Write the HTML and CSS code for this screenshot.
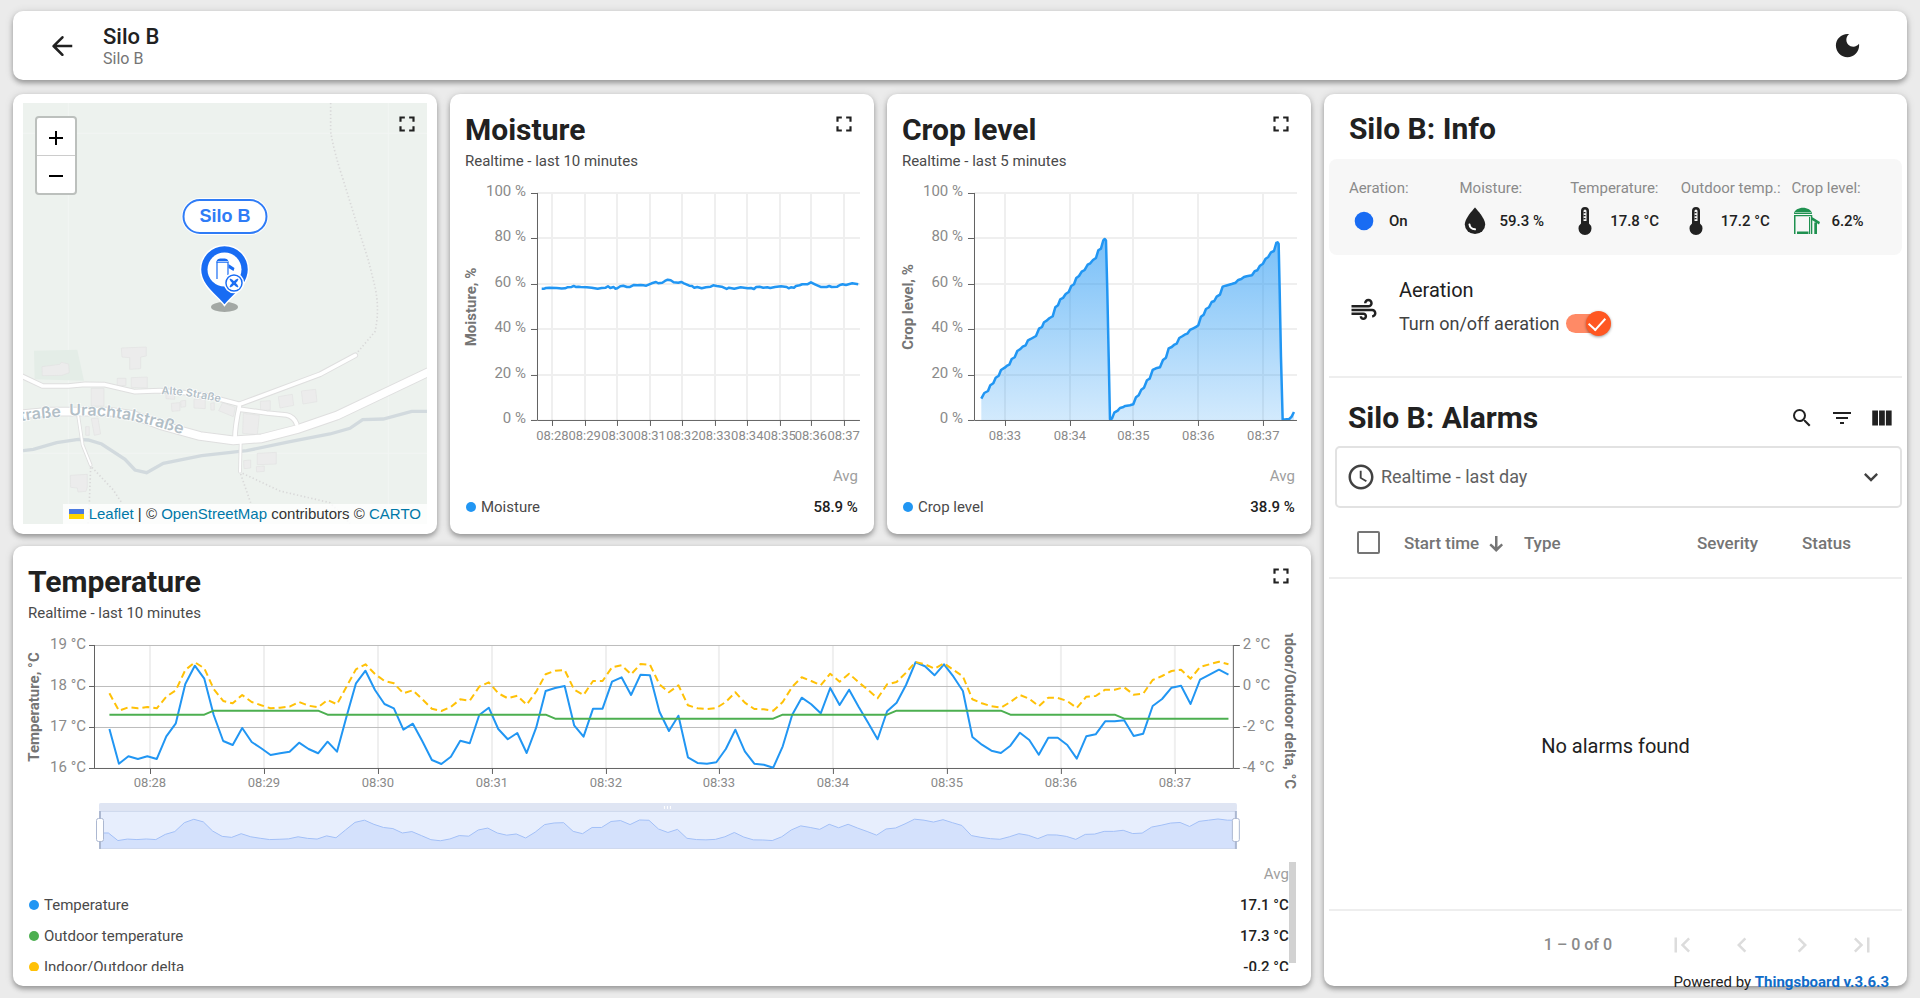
FILE: index.html
```html
<!DOCTYPE html>
<html lang="en">
<head>
<meta charset="utf-8">
<title>Silo B</title>
<link rel="stylesheet" href="styles.css">
</head>
<body>
<svg class="defs" aria-hidden="true">
  <symbol id="i-full" viewBox="0 0 24 24"><path d="M7 14H5v5h5v-2H7v-3zm-2-4h2V7h3V5H5v5zm12 7h-3v2h5v-5h-2v3zM14 5v2h3v3h2V5h-5z"/></symbol>
  <symbol id="i-thermo" viewBox="0 0 30 30"><path d="M15 1a4 4 0 0 0-4 4v12.400a6.500 6.500 0 1 0 8 0V5a4 4 0 0 0-4-4z"/><path d="M13.500 5a1.500 1.500 0 0 1 3 0v10h-3z" fill="#f7f7f7"/><path d="M15.500 6h-2v1.200h2zm0 3h-2v1.200h2zm0 3h-2v1.200h2z"/></symbol>
  <symbol id="i-chev" viewBox="0 0 24 24"><path d="M10 6 8.590 7.410 13.170 12l-4.580 4.590L10 18l6-6z"/></symbol>
  <symbol id="i-end" viewBox="0 0 24 24"><path d="M5.590 7.410 10.180 12l-4.590 4.590L7 18l6-6-6-6zM16 6h2v12h-2z"/></symbol>
</svg>

<header class="card topbar">
  <button class="icon-btn" aria-label="Back"><svg class="i-back" viewBox="0 0 24 24"><path d="M20.200 11H7.800l5.300-5.300a1 1 0 0 0-1.500-1.400L4.500 11.300a1 1 0 0 0 0 1.400l7.100 7a1 1 0 0 0 1.500-1.400L7.800 13h12.400z"/></svg></button>
  <div class="heading">
    <h1>Silo B</h1>
    <p>Silo B</p>
  </div>
  <button class="icon-btn" aria-label="Dark mode"><svg class="i-moon" viewBox="0 0 24 24"><path d="M12 3c-4.970 0-9 4.030-9 9s4.030 9 9 9 9-4.030 9-9c0-.46-.04-.92-.1-1.360-.98 1.370-2.580 2.260-4.400 2.260-2.980 0-5.400-2.420-5.400-5.400 0-1.810.89-3.420 2.260-4.400C12.920 3.040 12.460 3 12 3z"/></svg></button>
</header>

<main class="board">
  <div class="left">
    <div class="trio">
      <section class="card map-card">
        <div class="map">
          <svg class="tiles" viewBox="69 309 1212 1263" preserveAspectRatio="xMidYMid slice">
            <defs>
              <path id="p-alte" d="M484 1183Q570 1183 720 1222"/>
              <path id="p-str" d="M62 1264Q120 1254 220 1248"/>
              <path id="p-ura" d="M208 1247Q310 1244 400 1263T680 1346"/>
            </defs>
            <rect x="69" y="309" width="1212" height="1263" fill="#edf2ee"/>
            <path d="M205 309V1572M1165 309V1572M69 400H1281M69 1360H1281" stroke="#f2f5f3" stroke-width="3"/>
            <g transform="translate(0 780)">
              <path d="M102 272 232 269 252 362 104 358z" fill="#e4ede7"/>
              <g fill="#ececec" stroke="#e2e2e2" stroke-width="2">
                <path d="M126 320 180 313 184 307 206 312 208 338 186 346 127 347zM364 264 439 261V288L422 291V326L389 328V293L366 291zM352 355H378V376L352 378zM394 353 442 351V384L394 382zM274 385H312V438H274zM274 476 294 474 302 522 283 526zM257 500H268V526H257zM514 430 540 428V452L516 454zM542 423 557 421V440L543 442zM582 418 616 416V446L582 444zM632 430 643 428V450H633zM656 452 668 428 706 442 700 470zM781 424 811 422V450L782 452zM835 410 877 403 881 436 840 444zM904 393 947 388 951 425 909 432zM730 460 778 466 772 524 728 520zM772 580 829 577V612L772 614zM731 602 752 600V624L732 626zM769 620 793 618V634L770 636zM211 646 262 643V682L258 694 234 696 232 684 212 682zM498 402 524 404V418L498 416z"/>
              </g>
              <path class="trail" d="M992-471V-385Q1003-320 1030-240L1070-110 1105 0 1125 80Q1140 150 1125 215L1070 280M272 622 268 730 264 790M276 622 340 690 366 730M722 642 752 728M728 640 840 693 990 728 1050 790"/>
              <path d="M69 572 100 568 170 548 235 538 265 540 305 552 375 598 405 630 440 638 490 610 605 587 740 572 870 545 990 522 1050 505 1088 479 1150 477 1235 454 1281 454" fill="none" stroke="#d2dade" stroke-width="10"/>
              <g class="casing">
                <path d="M235 470 248 555 272 615M722 550 720 635" stroke-width="11"/>
                <path d="M60 346 128 378 205 378 255 373 315 374 405 395 480 392 600 402 718 433 960 343 1066 286M718 440Q705 500 705 535M722 448 800 459 860 465Q882 470 890 492" stroke-width="17"/>
                <path d="M60 463 150 455 330 455 400 465 480 495 600 528 700 541 785 535 890 508 1010 467 1290 334" stroke-width="29"/>
              </g>
              <g class="road">
                <path d="M235 470 248 555 272 615M722 550 720 635" stroke-width="6"/>
                <path d="M60 346 128 378 205 378 255 373 315 374 405 395 480 392 600 402 718 433 960 343 1066 286M718 440Q705 500 705 535M722 448 800 459 860 465Q882 470 890 492" stroke-width="11"/>
                <path d="M60 463 150 455 330 455 400 465 480 495 600 528 700 541 785 535 890 508 1010 467 1290 334" stroke-width="23"/>
              </g>
            </g>
            <text class="street small"><textPath href="#p-alte">Alte Straße</textPath></text>
            <text class="street"><textPath href="#p-str">traße</textPath></text>
            <text class="street"><textPath href="#p-ura">Urachtalstraße</textPath></text>
          </svg>
          <div class="zoom-ctl">
            <button aria-label="Zoom in"><svg viewBox="-1 -1 16 16"><path d="M0 7h14v2H0zM6 1h2v14H6z"/></svg></button>
            <button aria-label="Zoom out"><svg viewBox="-1 -1 16 16"><path d="M0 7h14v2H0z"/></svg></button>
          </div>
          <div class="pin">
            <span class="pin-label">Silo B</span>
            <svg class="pin-icon" viewBox="0 0 52 74">
              <ellipse cx="26" cy="64" rx="13.500" ry="5" fill="#a3a8a4"/>
              <path d="M26 62.500C19 53 2 43 2 26.500a24 24 0 0 1 48 0C50 43 33 53 26 62.500z" fill="#196cf3" stroke="#fff" stroke-width="1.500"/>
              <circle cx="26" cy="26.500" r="17" fill="#fff"/>
              <path d="M18.500 36V19h11v13" fill="none" stroke="#196cf3" stroke-width="1.200"/>
              <path d="M18 19.500c0-4 3-4 6-4s6 0 6 4zM30 21l6 4-1 3-5-3z" fill="#196cf3"/>
              <path d="M19 18.500h11" stroke="#a9c8fb"/>
              <circle cx="35.500" cy="40" r="9.500" fill="#196cf3" stroke="#fff" stroke-width="1.500"/>
              <circle cx="35.500" cy="40" r="7.300" fill="#fff"/>
              <path d="M31.500 36l3 1.500 1 2 1-2 3-1.500-1.500 3-2 1 2 1 1.500 3-3-1.500-1-2-1 2-3 1.500 1.500-3 2-1-2-1z" fill="#196cf3" stroke="#196cf3"/>
            </svg>
          </div>
          <p class="attribution"><svg viewBox="0 0 15 10"><path d="M0 0h15v5H0z" fill="#4c7be1"/><path d="M0 5h15v5H0z" fill="#ffd500"/></svg> <a href="#">Leaflet</a> | © <a href="#">OpenStreetMap</a> contributors © <a href="#">CARTO</a></p>
        </div>
        <button class="full" aria-label="Fullscreen"><svg><use href="#i-full"/></svg></button>
      </section>

      <section class="card chart-card">
        <div class="chart-head"><h2>Moisture</h2><p>Realtime - last 10 minutes</p></div>
        <button class="full" aria-label="Fullscreen"><svg><use href="#i-full"/></svg></button>
        <svg class="plot" id="moisture" viewBox="450 178 424 283"></svg>
        <table class="legend">
          <tr><th></th><th>Avg</th></tr>
          <tr><td><i class="dot blue"></i>Moisture</td><td>58.9 %</td></tr>
        </table>
      </section>

      <section class="card chart-card">
        <div class="chart-head"><h2>Crop level</h2><p>Realtime - last 5 minutes</p></div>
        <button class="full" aria-label="Fullscreen"><svg><use href="#i-full"/></svg></button>
        <svg class="plot" id="crop" viewBox="887 178 424 283"></svg>
        <table class="legend">
          <tr><th></th><th>Avg</th></tr>
          <tr><td><i class="dot blue"></i>Crop level</td><td>38.9 %</td></tr>
        </table>
      </section>
    </div>

    <section class="card chart-card temp-card">
      <div class="chart-head"><h2>Temperature</h2><p>Realtime - last 10 minutes</p></div>
      <button class="full" aria-label="Fullscreen"><svg><use href="#i-full"/></svg></button>
      <svg class="plot" id="temperature" viewBox="13 630 1298 229"></svg>
      <div class="legend-scroll">
        <table class="legend">
          <tr><th></th><th>Avg</th></tr>
          <tr><td><i class="dot blue"></i>Temperature</td><td>17.1 °C</td></tr>
          <tr><td><i class="dot green"></i>Outdoor temperature</td><td>17.3 °C</td></tr>
          <tr><td><i class="dot amber"></i>Indoor/Outdoor delta</td><td>-0.2 °C</td></tr>
        </table>
        <span class="scrollbar"></span>
      </div>
    </section>
  </div>

  <section class="card side">
    <h2 class="side-title">Silo B: Info</h2>
    <dl class="stats">
      <div><dt>Aeration:</dt><dd><svg viewBox="0 0 30 30"><circle cx="15" cy="15" r="9.300" fill="#196cf3"/></svg>On</dd></div>
      <div><dt>Moisture:</dt><dd><svg viewBox="0 0 30 30"><path d="M15 1.500S4.800 12 4.800 18.400a10.200 9.600 0 0 0 20.400 0C25.200 12 15 1.500 15 1.500z"/><path d="M9.500 18.500c.3 3 2.300 4.500 5.500 4.800" fill="none" stroke="#fff" stroke-width="2" stroke-linecap="round"/></svg>59.3 %</dd></div>
      <div><dt>Temperature:</dt><dd><svg><use href="#i-thermo"/></svg>17.8 °C</dd></div>
      <div><dt>Outdoor temp.:</dt><dd><svg><use href="#i-thermo"/></svg>17.2 °C</dd></div>
      <div><dt>Crop level:</dt><dd><svg viewBox="0 0 30 30"><g fill="#1f9150"><path d="M3 8c0-4 5-6.200 9-6.200S21 4 21 8zM3 9h18v1.300H3zM3 9h1.500v19H3zM18 11h1.200v17H18zM20 9h1.300v19H20zM6 25.500h11.500V28H6zM21 11l8 5-1 2.500-7-4.500zM23.300 16.500H26V28h-2.700z"/><path d="M4 6.500h16" stroke="#8fcbaa"/></g></svg>6.2%</dd></div>
    </dl>
    <div class="aeration">
      <svg viewBox="0 0 24 24"><path d="M14.500 17c0 1.650-1.350 3-3 3s-3-1.350-3-3h2c0 .55.45 1 1 1s1-.45 1-1-.45-1-1-1H2v-2h9.500c1.650 0 3 1.350 3 3zM19 6.500C19 4.570 17.430 3 15.500 3S12 4.570 12 6.500h2c0-.83.67-1.500 1.500-1.500s1.500.67 1.500 1.500S16.330 8 15.500 8H2v2h13.500c1.930 0 3.500-1.570 3.500-3.500zM18.500 11H2v2h16.500c.83 0 1.500.67 1.500 1.500s-.67 1.500-1.500 1.500v2c1.930 0 3.500-1.570 3.500-3.500S20.430 11 18.500 11z"/></svg>
      <div>
        <h3>Aeration</h3>
        <label>Turn on/off aeration <input type="checkbox" role="switch" class="toggle" checked></label>
      </div>
    </div>

    <div class="alarms-head">
      <h2>Silo B: Alarms</h2>
      <button class="tool" aria-label="Search"><svg viewBox="0 0 24 24"><path d="M15.500 14h-.79l-.28-.27A6.470 6.470 0 0 0 16 9.500 6.500 6.500 0 1 0 9.500 16c1.610 0 3.090-.59 4.230-1.570l.27.28v.79l5 4.990L20.490 19l-4.990-5zm-6 0C7.010 14 5 11.990 5 9.500S7.010 5 9.500 5 14 7.010 14 9.500 11.990 14 9.500 14z"/></svg></button>
      <button class="tool" aria-label="Filter"><svg viewBox="0 0 24 24"><path d="M10 18h4v-2h-4v2zM3 6v2h18V6H3zm3 7h12v-2H6v2z"/></svg></button>
      <button class="tool" aria-label="Columns"><svg viewBox="0 0 24 24"><path d="M3 5h5.300v14H3zM9.300 5h5.300v14H9.300zM15.600 5h5.300v14h-5.300z"/></svg></button>
    </div>
    <button class="period">
      <svg viewBox="0 0 24 24"><path d="M11.990 2C6.470 2 2 6.480 2 12s4.470 10 9.990 10C17.520 22 22 17.520 22 12S17.520 2 11.990 2zM12 20c-4.420 0-8-3.580-8-8s3.580-8 8-8 8 3.580 8 8-3.580 8-8 8zM12.500 7H11v6l4.900 3 .8-1.200-4.200-2.500z"/></svg>
      <span>Realtime - last day</span>
      <svg class="down" viewBox="0 0 24 24"><path d="M7.410 8.590 12 13.170l4.590-4.580L18 10l-6 6-6-6z"/></svg>
    </button>
    <table class="alarms">
      <colgroup><col class="c-check"><col class="c-time"><col><col class="c-sev"><col class="c-status"></colgroup>
      <thead><tr>
        <th><input type="checkbox" class="check" aria-label="Select all"></th>
        <th>Start time <svg viewBox="0 0 14 16"><path d="M6 0h2.500v11l4-3.500L14 9.200 7.200 16 .4 9.200 2 7.500 6 11z"/></svg></th>
        <th>Type</th><th>Severity</th><th>Status</th>
      </tr></thead>
    </table>
    <p class="empty">No alarms found</p>
    <nav class="pager" aria-label="Pages">
      <span>1 – 0 of 0</span>
      <button disabled aria-label="First page"><svg class="flip"><use href="#i-end"/></svg></button>
      <button disabled aria-label="Previous page"><svg class="flip"><use href="#i-chev"/></svg></button>
      <button disabled aria-label="Next page"><svg><use href="#i-chev"/></svg></button>
      <button disabled aria-label="Last page"><svg><use href="#i-end"/></svg></button>
    </nav>
  </section>
</main>
<footer class="powered">Powered by <a href="#">Thingsboard v.3.6.3</a></footer>
<script src="charts.js"></script>
</body>
</html>
```

FILE: styles.css
```css
* { box-sizing: border-box; margin: 0; padding: 0; }
body {
  min-height: 100vh;
  padding: 11px 13px 12px;
  display: flex;
  flex-direction: column;
  gap: 14px;
  background: #ebebeb;
  color: #212121;
  font: 15px/20px Roboto, "Liberation Sans", sans-serif;
  position: relative;
}
button { background: none; border: 0; font: inherit; color: inherit; cursor: pointer; }
svg { fill: #212121; display: block; }
h1, h2, h3, th { font-weight: 500; }
.defs { position: absolute; width: 0; height: 0; }
.card {
  background: #fff;
  border-radius: 10px;
  box-shadow: 0 3px 5px rgba(0, 0, 0, .3), 0 1px 10px rgba(0, 0, 0, .12);
  position: relative;
}

.topbar { display: flex; align-items: center; min-height: 69px; padding: 0 44px 0 33px; }
.icon-btn { width: 32px; height: 32px; display: grid; place-items: center; }
.i-back { width: 30px; height: 30px; }
.i-moon { width: 31px; height: 31px; }
.heading { flex: 1; margin-left: 25px; padding-top: 2px; }
.heading h1 { font-size: 22px; line-height: 24px; }
.heading p { font-size: 16px; color: #757575; }

.board { flex: 1; display: grid; grid-template-columns: 69fr 31fr; gap: 13px; }
.left { display: grid; grid-template-rows: 1fr 1fr; gap: 12px; min-width: 0; }
.trio { display: grid; grid-template-columns: repeat(3, 1fr); gap: 13px; }
.full { position: absolute; top: 17px; right: 17px; width: 26px; height: 26px; }
.full svg { width: 26px; height: 26px; }

.map-card { padding: 9px 10px 10px; }
.map { position: relative; height: 100%; overflow: hidden; }
.tiles { width: 100%; height: 100%; position: absolute; }
.trail { fill: none; stroke: #d9d9d9; stroke-width: 5; stroke-dasharray: 4 7; }
.casing, .road { fill: none; stroke-linecap: round; stroke-linejoin: round; }
.casing { stroke: #dfdfdf; }
.road { stroke: #fff; }
.street { font: 600 48px Inter, sans-serif; fill: #b3bfc7; stroke: #fff; stroke-width: 4; paint-order: stroke; }
.street.small { font-size: 33px; }
.zoom-ctl {
  position: absolute; left: 12px; top: 13px; width: 42px;
  border: 2px solid #bcc0bd; border-radius: 4px; background: #fff;
}
.zoom-ctl button { width: 38px; height: 37px; display: grid; place-items: center; }
.zoom-ctl button + button { border-top: 1px solid #ccc; height: 38px; }
.zoom-ctl svg { width: 16px; height: 16px; fill: #000; }
.pin { position: absolute; left: 50%; top: 96px; transform: translateX(-50%); display: grid; justify-items: center; }
.pin-label {
  padding: 0 15px; line-height: 31px; border: 2px solid #2f7cf6; border-radius: 18px; background: #fff;
  box-shadow: 0 0 0 1px #fff; color: #2f7cf6; font-family: "Liberation Sans", sans-serif; font-weight: 700; font-size: 18px;
}
.pin-icon { width: 52px; height: 74px; margin-top: 9px; }
.attribution {
  position: absolute; right: 0; bottom: 0; padding: 0 6px; background: rgba(255, 255, 255, .8);
  font-family: "Liberation Sans", sans-serif; color: #333; line-height: 20px; white-space: nowrap;
}
.attribution svg { display: inline-block; width: 15px; height: 10px; }
.attribution a { color: #0078a8; text-decoration: none; }

.chart-card { display: flex; flex-direction: column; }
.chart-head { height: 84px; padding: 19px 15px 0; }
.chart-head h2, .side-title, .alarms-head h2 { font-size: 30px; line-height: 34px; font-weight: 700; }
.chart-head p { color: #4a4a4a; margin-top: 4px; }
.plot { width: 100%; }
.plot text { font-size: 15px; fill: #8a8a8a; text-anchor: end; }
.plot .time { font-size: 13px; text-anchor: middle; }
.plot .axis-name { font-weight: 700; fill: #757575; text-anchor: middle; }
.plot .grid { stroke: #efefef; stroke-width: 2; }
.plot .grid-strong { stroke: #bdbdbd; stroke-width: 1; }
.plot .axis { stroke: #616161; fill: none; }
.plot .line { fill: none; stroke: #2196f3; stroke-linejoin: round; }
.legend { width: calc(100% - 32px); margin: 0 16px; border-collapse: collapse; }
.legend tr { height: 31px; }
.legend td { color: #4a4a4a; }
.legend th { font-weight: 400; color: #9e9e9e; }
.legend th:last-child, .legend td:last-child { text-align: right; }
.legend td:last-child { color: #212121; font-weight: 500; }
.dot { display: inline-block; width: 10px; height: 10px; border-radius: 50%; margin-right: 5px; }
.blue { background: #2196f3; }
.green { background: #4caf50; }
.amber { background: #ffc107; }
.legend-scroll { height: 112px; overflow: hidden; position: relative; margin-right: 6px; }
.scrollbar { position: absolute; right: 9px; top: 3px; width: 7px; height: 101px; background: #d2d2d2; }

.side { display: flex; flex-direction: column; padding: 0 5px; }
.side-title { padding: 18px 20px 13px; }
.stats {
  display: grid; grid-template-columns: repeat(5, 1fr); height: 96px; padding: 19px 0 0 20px;
  background: #f7f7f7; border-radius: 8px;
}
.stats dt { color: #8a8a8a; white-space: nowrap; }
.stats dd { display: flex; align-items: center; gap: 10px; margin-top: 8px; font-weight: 500; white-space: nowrap; line-height: 30px; }
.stats svg { width: 30px; height: 30px; }
.aeration { display: flex; align-items: center; gap: 20px; height: 123px; padding: 0 20px 12px; border-bottom: 2px solid #eee; }
.aeration > svg { width: 30px; height: 30px; }
.aeration > div { padding-bottom: 6px; }
.aeration h3 { font-size: 20px; line-height: 28px; font-weight: 400; }
.aeration label { display: flex; align-items: center; gap: 7px; margin-top: 6px; font-size: 18px; line-height: 28px; color: #424242; }
.toggle { appearance: none; width: 43px; height: 19px; border-radius: 10px; background: #ff8a66; position: relative; }
.toggle::before {
  content: ""; position: absolute; right: -2px; top: -3px; width: 25px; height: 25px; border-radius: 50%;
  background: #ff5722; box-shadow: 0 1px 3px rgba(0, 0, 0, .4);
}
.toggle::after {
  content: ""; position: absolute; right: 4px; top: 3px; width: 14px; height: 8px;
  border: solid #fff; border-width: 0 0 2px 2px; transform: rotate(-48deg);
}
.alarms-head { display: flex; align-items: center; gap: 12px; height: 68px; padding: 11px 6px 0 19px; }
.alarms-head h2 { flex: 1; }
.tool { width: 28px; height: 28px; }
.tool svg { width: 24px; height: 24px; margin: auto; }
.tool:last-child svg { width: 26px; height: 26px; }
.period {
  display: flex; align-items: center; gap: 5px; height: 62px; margin-left: 6px; padding: 0 15px 0 9px;
  border: 2px solid #e2e2e2; border-radius: 5px; text-align: left; font-size: 18px; color: #616161;
}
.period span { flex: 1; }
.period svg { width: 30px; height: 30px; fill: #424242; }
.period .down { width: 28px; height: 28px; }
.alarms { width: 100%; border-collapse: collapse; table-layout: fixed; }
.alarms tr { height: 70px; border-bottom: 2px solid #eee; }
.alarms th { text-align: left; font-size: 17px; color: #757575; white-space: nowrap; }
.alarms th svg { display: inline-block; width: 14px; height: 16px; margin-left: 6px; fill: #757575; vertical-align: -3px; }
.c-check { width: 75px; }
.c-time { width: 120px; }
.c-sev { width: 105px; }
.c-status { width: 100px; }
.check { appearance: none; display: block; margin-left: 28px; width: 23px; height: 23px; border: 2px solid #757575; border-radius: 2px; }
.empty { flex: 1; display: grid; place-items: center; padding-top: 4px; font-size: 20px; }
.pager { display: flex; align-items: center; justify-content: flex-end; gap: 28px; height: 77px; padding: 0 24px 8px 0; border-top: 2px solid #eee; }
.pager span { color: #8a8a8a; font-size: 16px; font-weight: 500; margin-right: 26px; }
.pager button { width: 32px; height: 32px; }
.pager svg { width: 30px; height: 30px; margin: auto; fill: #dcdcdc; }
.flip { transform: scaleX(-1); }
.powered { position: absolute; right: 31px; bottom: 6px; line-height: 20px; }
.powered a { color: #106cc8; font-weight: 700; text-decoration: none; }
```

FILE: charts.js
```js
const NS = 'http://www.w3.org/2000/svg';

function add(parent, tag, attrs, text) {
  const el = document.createElementNS(NS, tag);
  for (const k in attrs) el.setAttribute(k, attrs[k]);
  if (text) el.textContent = text;
  parent.appendChild(el);
  return el;
}

function snap(v) { return Math.round(v) + 0.5; }

function toPath(points) {
  return 'M' + points.map(p => p[0].toFixed(1) + ' ' + p[1].toFixed(1)).join('L');
}

/* Percent charts: curve points are kept in thirds of a pixel. */
function percentChart(id, left, name, times, curve, filled) {
  const svg = document.getElementById(id);
  const top = 193, bottom = 420, axisX = left + 87, right = left + 410;
  times.forEach(([x]) => {
    add(svg, 'path', { class: 'grid', d: `M${Math.round(x)} ${top}V${bottom}` });
  });
  [100, 80, 60, 40, 20, 0].forEach((v, i) => {
    const y = snap(top + (bottom - top) * i / 5);
    if (v) add(svg, 'path', { class: 'grid', d: `M${axisX} ${y - 0.5}H${right}` });
    add(svg, 'path', { class: 'axis', d: `M${axisX - 6} ${y}H${axisX}` });
    add(svg, 'text', { x: left + 76, y: y + 3 }, v + ' %');
  });
  times.forEach(([x, label]) => {
    add(svg, 'path', { class: 'axis', d: `M${snap(x)} ${bottom}v6` });
    add(svg, 'text', { class: 'time', x: x, y: 440 }, label);
  });
  const pts = curve.trim().split(/\s+/).map(s => s.split(',').map(Number))
    .map(([x, y]) => [left - 5 + (filled ? -2 : 0) + x / 3, 90 + y / 3]);
  if (filled) {
    const grad = add(svg, 'linearGradient', { id: 'fade', x1: 0, y1: 0, x2: 0, y2: 1 });
    add(grad, 'stop', { offset: 0, 'stop-color': '#2196f3', 'stop-opacity': 0.6 });
    add(grad, 'stop', { offset: 1, 'stop-color': '#2196f3', 'stop-opacity': 0.2 });
    add(svg, 'path', { fill: 'url(#fade)', d: toPath(pts) + `V${bottom}H${pts[0][0]}Z` });
  }
  add(svg, 'path', { class: 'line', 'stroke-width': 2.5, d: toPath(pts) });
  add(svg, 'path', { class: 'axis', d: `M${axisX + 0.5} ${top}V${bottom + 0.5}H${right}` });
  const nx = left + 26;
  add(svg, 'text', { class: 'axis-name', x: nx, y: 307, transform: `rotate(-90 ${nx} 307)` }, name);
}

percentChart('moisture', 450, 'Moisture, %',
  [322, 419, 517, 614, 712, 809, 907, 1004, 1098, 1196].map((x, i) => [445 + x / 3, '08:' + (28 + i)]),
  `290,596 298,596 303,594 313,593 335,594 350,595.5 360,595 367,592 380,591 386,588 392,591 400,590.5
   407,591 425,591.5 440,593 458,596 470,594 482,593 489,589 496,594 506,591 511,596 517,595 526,589
   535,587.5 546,591 555,591 567,585 577,586 587,585 595,586 604,587 620,580 633,576 640,580 652,578
   660,573 668,569 677,571 686,577 700,578.5 709,576 717,580 733,587 741,588 748,593 757,591 770,595
   783,592 797,590 805,586 815,588 830,590 845,597 852,593 868,596 887,592 908,595 918,594 927,597
   934,591 944,590 955,593 967,592 976,594 990,591 1008,589 1025,591 1031,595 1038,592 1047,593
   1053,588 1064,586 1072,583 1087,583 1098,577 1110,583 1127,591 1145,591 1153,588 1160,591 1177,590
   1185,585 1193,583 1203,585 1222,580 1240,583`, false);

percentChart('crop', 887, 'Crop level, %',
  [375, 570, 760, 955, 1150].map((x, i) => [880 + x / 3, '08:' + (33 + i)]),
  `304,926 313,909 324,903 331,886 340,880 347,863 356,857 363,840 374,833 380,828 388,824 395,807
   404,802 412,783 420,778 428,770 437,766 444,751 452,747 468,738 477,716 486,711 492,697 500,692
   508,685 518,679 526,652 534,646 541,628 549,624 557,612 566,606 574,588 582,583 589,564 597,558
   605,545 614,540 623,524 631,520 639,510 648,504 655,481 663,476 670,451 674,447 678,451 682,600
   686,800 690,988 696,986 703,968 713,962 720,954 728,952 736,948 750,946 760,943 768,922 776,916
   784,899 792,893 801,871 809,866 818,840 828,835 840,832 849,810 858,803 866,775 875,771 882,765
   890,761 898,744 907,739 914,734 922,731 930,720 940,715 948,711 955,706 963,680 971,674 978,657
   987,652 995,636 1003,633 1010,620 1020,614 1028,590 1037,587 1055,582 1067,578 1075,570 1084,567
   1092,561 1100,559 1116,556 1124,544 1132,541 1140,527 1149,521 1157,506 1165,501 1173,487 1182,483
   1189,459 1193,457 1196,462 1199,600 1203,800 1208,989 1220,988 1228,987 1235,980 1242,966`, true);

/* Temperature chart: one sample every five seconds, in thirds of a pixel below the plot origin. */
const indoor = [567,671,649,657,649,657,589,550,432,377,416,525,603,615,564,606,625,645,640,635,608,627,640,605,635,
  530,430,392,450,492,505,569,551,604,660,672,650,602,610,525,503,567,598,579,639,563,453,444,438,556,590,506,506,
  425,412,465,404,406,515,573,527,652,669,671,667,627,569,634,671,674,683,619,524,473,493,520,444,495,449,500,548,
  598,514,488,435,367,379,406,373,410,453,591,614,632,639,617,578,600,644,593,593,615,656,589,583,544,544,541,588,
  581,498,477,443,437,492,419,404,389,404];
const delta = [460,512,502,505,501,505,470,451,390,367,385,447,483,490,465,486,496,505,503,500,486,497,502,480,493,
  440,388,373,402,423,430,460,451,478,506,513,501,478,482,440,427,460,475,467,494,455,403,392,390,449,465,423,423,
  382,376,403,372,374,433,457,436,496,505,507,504,486,457,488,507,508,512,486,440,412,423,436,401,425,401,427,450,
  475,433,426,398,366,373,386,370,390,409,478,490,499,503,486,465,476,499,473,474,483,504,470,468,449,449,442,464,
  461,420,408,393,389,416,381,373,365,373];
const outdoor = delta.map((_, n) =>
  n < 11 ? 524 : n < 23 ? 512 : n < 47 ? 524 : n < 71 ? 536 : n < 83 ? 524 : n < 95 ? 512 : n < 107 ? 524 : 536);

(function temperatureChart() {
  const svg = document.getElementById('temperature');
  const left = 95, right = 1234, top = 645, bottom = 768;
  const sampleX = n => 109.4 + n * 9.485;
  const series = a => a.map((v, n) => [sampleX(n), 540 + v / 3]);

  for (let i = 0; i < 10; i++) {
    const x = snap(150.4 + i * 113.8);
    add(svg, 'path', { class: 'grid', d: `M${x - 0.5} ${top}V${bottom}` });
    add(svg, 'path', { class: 'axis', d: `M${x} ${bottom}v6` });
    add(svg, 'text', { class: 'time', x: x - 0.5, y: 787 }, '08:' + (28 + i));
  }
  [[645, 19, 2], [686, 18, 0], [727, 17, -2], [768, 16, -4]].forEach(([y, a, b]) => {
    add(svg, 'path', { class: y < bottom ? 'grid grid-strong' : 'axis', d: `M${left} ${y + 0.5}H${right}` });
    add(svg, 'path', { class: 'axis', d: `M${left - 6} ${y + 0.5}H${left}M${right} ${y + 0.5}h6` });
    add(svg, 'text', { x: 86, y: y + 4 }, a + ' °C');
    add(svg, 'text', { x: 1243, y: y + 4, style: 'text-anchor:start' }, b + ' °C');
  });
  add(svg, 'path', { class: 'axis', d: `M${left - 0.5} ${top}V${bottom}M${right - 0.5} ${top}V${bottom}` });
  add(svg, 'path', { class: 'line', d: toPath(series(indoor)), 'stroke-width': 2 });
  add(svg, 'path', { class: 'line', d: toPath(series(outdoor)), 'stroke-width': 2, style: 'stroke:#4caf50' });
  add(svg, 'path', { class: 'line', d: toPath(series(delta)), 'stroke-width': 2, style: 'stroke:#ffc107;stroke-dasharray:7 4' });

  add(svg, 'text', { class: 'axis-name', x: 39, y: 707, transform: 'rotate(-90 39 707)' }, 'Temperature, °C');
  const clip = add(svg, 'clipPath', { id: 'name-clip' });
  add(clip, 'rect', { x: 1270, y: 633, width: 40, height: 165 });
  const g = add(svg, 'g', { 'clip-path': 'url(#name-clip)' });
  add(g, 'text', { class: 'axis-name', x: 1285, y: 707, transform: 'rotate(90 1285 707)' }, 'Indoor/Outdoor delta, °C');

  /* Range slider with a miniature of the delta series. */
  const mini = delta.map((v, n) => [sampleX(n) - 1, 819.3 + (v - 367) * 0.147]);
  mini.unshift([99, mini[0][1]]);
  mini.push([1237, mini[mini.length - 1][1]]);
  add(svg, 'rect', { x: 99, y: 803, width: 1138, height: 46, rx: 2, fill: '#e7eefd' });
  add(svg, 'rect', { x: 99, y: 803, width: 1138, height: 8, rx: 2, fill: '#dfe5f3' });
  add(svg, 'path', { d: toPath(mini) + 'V849H99Z', fill: '#d4e1fc' });
  add(svg, 'path', { d: toPath(mini), fill: 'none', stroke: '#a3c0f7' });
  add(svg, 'path', { d: 'M99 811.5H1237M99 848.5H1237', stroke: '#cfd9ee' });
  add(svg, 'path', { d: 'M664.500 806v3M667.500 806v3M670.500 806v3', stroke: '#fff' });
  [100, 1236].forEach(x => {
    add(svg, 'path', { d: `M${x} 811V849`, stroke: '#acb8d1', 'stroke-width': 2 });
    add(svg, 'rect', { x: x - 3.5, y: 818.5, width: 7, height: 23, rx: 2, fill: '#fff', stroke: '#acb8d1' });
  });
})();
```
